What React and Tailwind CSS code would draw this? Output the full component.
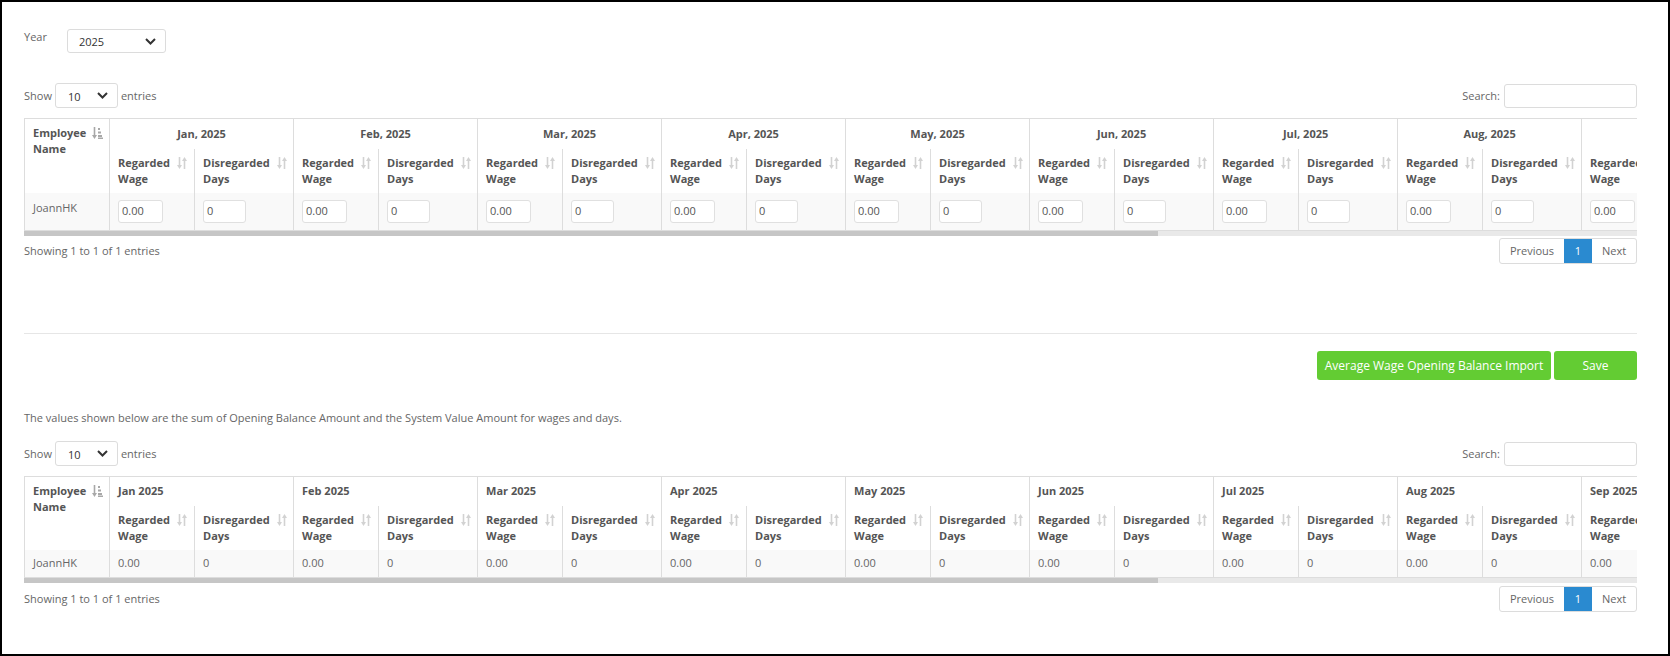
import React from 'react';

const MONTHS = ['Jan', 'Feb', 'Mar', 'Apr', 'May', 'Jun', 'Jul', 'Aug', 'Sep', 'Oct', 'Nov', 'Dec'];

const SortBoth = () => (
  <svg width="10" height="12" viewBox="0 0 10 12" className="shrink-0 mt-[2px]">
    <path d="M2.5 0v9" stroke="#d2d2d2" strokeWidth="1.6" />
    <path d="M0 8h5l-2.5 4z" fill="#d2d2d2" />
    <path d="M7.5 3v9" stroke="#d2d2d2" strokeWidth="1.6" />
    <path d="M5 4h5L7.5 0z" fill="#d2d2d2" />
  </svg>
);

const SortAsc = () => (
  <svg width="11" height="12" viewBox="0 0 11 12" className="shrink-0 mt-[2px]">
    <path d="M2.5 0v9" stroke="#a8a8a8" strokeWidth="1.6" />
    <path d="M0 8h5l-2.5 4z" fill="#a8a8a8" />
    <rect x="6" y="1" width="2" height="2" fill="#a8a8a8" />
    <rect x="6" y="4.5" width="3" height="2" fill="#a8a8a8" />
    <rect x="6" y="8" width="4" height="2" fill="#a8a8a8" />
    <rect x="6" y="10.5" width="5" height="1.5" fill="#a8a8a8" />
  </svg>
);

const Chevron = () => (
  <svg width="11" height="7" viewBox="0 0 11 7">
    <path d="M1 1l4.5 4.5L10 1" stroke="#333" strokeWidth="2" fill="none" />
  </svg>
);

const SelectBox = ({ value, className }) => (
  <div className={`flex items-center justify-between border border-[#dcdcdc] rounded-[3px] bg-white text-[11px] text-[#333] ${className}`}>
    <span className="pt-[2px]">{value}</span>
    <Chevron />
  </div>
);

const TopBar = () => (
  <div className="flex items-center justify-between">
    <div className="flex items-center">
      <span>Show</span>
      <SelectBox value="10" className="ml-[3px] h-[25px] w-[63px] pl-[12px] pr-[9px]" />
      <span className="ml-[3px]">entries</span>
    </div>
    <div className="flex items-center">
      <span>Search:</span>
      <div className="ml-[4px] h-[24px] w-[133px] border border-[#dcdcdc] rounded-[3px] bg-white" />
    </div>
  </div>
);

const Pager = () => (
  <div className="flex items-center justify-between">
    <span>Showing 1 to 1 of 1 entries</span>
    <div className="flex h-[26px] border border-[#dcdcdc] rounded-[3px] overflow-hidden">
      <div className="w-[64px] flex items-center justify-center">Previous</div>
      <div className="w-[28px] flex items-center justify-center bg-[#2a8ad0] text-white">1</div>
      <div className="w-[44px] flex items-center justify-center">Next</div>
    </div>
  </div>
);

const HeadLabel = ({ a, b, icon }) => (
  <div className="flex items-start justify-between">
    <div className="leading-[16px]">
      <div>{a}</div>
      <div>{b}</div>
    </div>
    {icon}
  </div>
);

const WageTable = ({ editable }) => (
  <div className="mt-[10px]">
    <div className="overflow-hidden">
      <table className="table-fixed border-collapse border border-[#dddddd] w-[2293px] text-left">
        <colgroup>
          <col className="w-[85px]" />
          {MONTHS.map((m) => (
            <React.Fragment key={m}>
              <col className="w-[85px]" />
              <col className="w-[99px]" />
            </React.Fragment>
          ))}
        </colgroup>
        <thead className="text-[#555] font-bold">
          <tr className={editable ? 'h-[30px]' : 'h-[29px]'}>
            <th rowSpan={2} className="align-top pt-[6px] pl-[8px] pr-[6px] font-bold">
              <HeadLabel a="Employee" b="Name" icon={<SortAsc />} />
            </th>
            {MONTHS.map((m) => (
              <th
                key={m}
                colSpan={2}
                className={`border-l border-[#dddddd] font-bold ${editable ? 'text-center' : 'text-left pl-[8px]'}`}
              >
                {editable ? `${m}, 2025` : `${m} 2025`}
              </th>
            ))}
          </tr>
          <tr className="h-[44px]">
            {MONTHS.map((m) => (
              <React.Fragment key={m}>
                <th className="border-l border-[#dddddd] align-top pt-[6px] pl-[8px] pr-[7px] font-bold">
                  <HeadLabel a="Regarded" b="Wage" icon={<SortBoth />} />
                </th>
                <th className="border-l border-[#dddddd] align-top pt-[6px] pl-[8px] pr-[6px] font-bold">
                  <HeadLabel a="Disregarded" b="Days" icon={<SortBoth />} />
                </th>
              </React.Fragment>
            ))}
          </tr>
        </thead>
        <tbody>
          <tr className={`bg-[#f9f9f9] ${editable ? 'h-[38px]' : 'h-[28px]'}`}>
            <td className={`pl-[8px] ${editable ? 'align-top pt-[7px]' : 'align-middle'}`}>JoannHK</td>
            {MONTHS.map((m) => (
              <React.Fragment key={m}>
                <td className={`border-l border-[#dddddd] pl-[8px] ${editable ? 'align-top pt-[7px]' : 'align-middle'}`}>
                  {editable ? (
                    <div className="h-[23px] w-[45px] border border-[#e0e0e0] rounded-[3px] bg-white pl-[3px] flex items-center text-[#555]">0.00</div>
                  ) : (
                    '0.00'
                  )}
                </td>
                <td className={`border-l border-[#dddddd] pl-[8px] ${editable ? 'align-top pt-[7px]' : 'align-middle'}`}>
                  {editable ? (
                    <div className="h-[23px] w-[43px] border border-[#e0e0e0] rounded-[3px] bg-white pl-[3px] flex items-center text-[#555]">0</div>
                  ) : (
                    '0'
                  )}
                </td>
              </React.Fragment>
            ))}
          </tr>
        </tbody>
      </table>
    </div>
    <div className="h-[5px] bg-[#e9e9e9]">
      <div className="h-full w-[1134px] bg-[#c6c6c6]" />
    </div>
  </div>
);

export default function App() {
  return (
    <div className="w-[1670px] h-[656px] border-2 border-black bg-white overflow-hidden font-['Open_Sans',sans-serif] text-[11px] leading-[16px] text-[#666]">
      <div className="pl-[22px] pr-[31px] pt-[27px]">
        <div className="flex items-start">
          <span className="w-[43px]">Year</span>
          <SelectBox value="2025" className="h-[24px] w-[99px] pl-[11px] pr-[9px]" />
        </div>

        <div className="mt-[30px]">
          <TopBar />
        </div>
        <WageTable editable />
        <div className="mt-[2px]">
          <Pager />
        </div>

        <div className="mt-[69px] h-px bg-[#e6e6e6]" />

        <div className="mt-[17px] flex justify-end gap-[3px] text-[12px]">
          <button className="h-[29px] w-[234px] rounded-[3px] bg-[#63cc33] text-white">Average Wage Opening Balance Import</button>
          <button className="h-[29px] w-[83px] rounded-[3px] bg-[#63cc33] text-white">Save</button>
        </div>

        <p className="mt-[30px]">
          The values shown below are the sum of Opening Balance Amount and the System Value Amount for wages and days.
        </p>

        <div className="mt-[15px]">
          <TopBar />
        </div>
        <WageTable />
        <div className="mt-[3px]">
          <Pager />
        </div>
      </div>
    </div>
  );
}
